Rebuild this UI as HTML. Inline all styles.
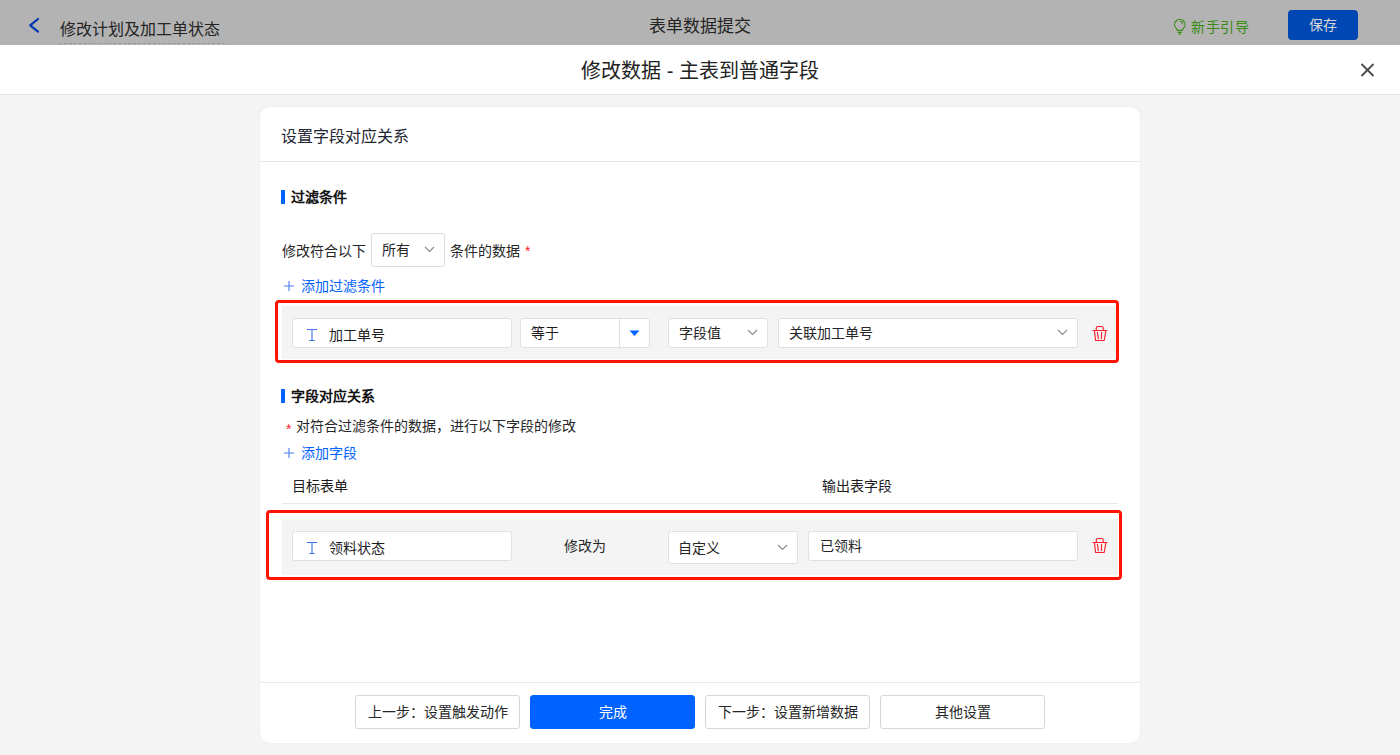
<!DOCTYPE html>
<html lang="zh-CN"><head><meta charset="utf-8">
<style>
*{box-sizing:border-box;margin:0;padding:0}
html,body{width:1400px;height:755px;overflow:hidden;background:#f4f4f4;font-family:"Liberation Sans",sans-serif;color:#333}
.abs{position:absolute}
.topbar{position:absolute;left:0;top:0;width:1400px;height:45px;background:#b3b3b3}
.mhead{position:absolute;left:0;top:45px;width:1400px;height:50px;background:#fff;border-bottom:1px solid #e2e2e2}
.card{position:absolute;left:260px;top:107px;width:880px;height:636px;background:#fff;border-radius:10px;box-shadow:0 0 3px rgba(0,0,0,0.04)}
.txt{position:absolute;white-space:nowrap;line-height:1}
.box{position:absolute;background:#fff;border:1px solid #e0e0e0;border-radius:3px}
.redbox{position:absolute;border:3px solid #ff1404;border-radius:4px}
.btn{position:absolute;top:695px;height:34px;border:1px solid #d6d6d6;border-radius:3px;background:#fff;font-size:14px;line-height:32px;text-align:center;color:#262626}
</style></head><body>
<div class="topbar">
  <svg class="abs" style="left:27px;top:17px" width="14" height="17" viewBox="0 0 14 17"><path d="M11 2 L3.2 8.3 L11 14.6" fill="none" stroke="#0039b3" stroke-width="2.2" stroke-linecap="round" stroke-linejoin="round"/></svg>
  <div class="txt" style="left:60px;top:21.5px;font-size:16px;color:#242424">修改计划及加工单状态</div>
  <div class="abs" style="left:59px;top:43px;width:166px;border-top:1px dashed #9a9a9a"></div>
  <div class="txt" style="left:649px;top:18px;font-size:17px;color:#242424">表单数据提交</div>
  <svg class="abs" style="left:1172px;top:17px" width="16" height="19" viewBox="0 0 16 19"><path d="M5.3 13.4Q5.3 12.2 3.82 10.84A5.2 5.2 0 1 1 11.78 10.84Q10.3 12.2 10.3 13.4Z" fill="none" stroke="#3c8d17" stroke-width="1.2" stroke-linejoin="round"/><path d="M5.6 15.4H9.9M6.6 17.2H8.9" stroke="#3c8d17" stroke-width="1.2"/><path d="M8.3 4.3A3.3 3.3 0 0 1 10.7 7" fill="none" stroke="#3c8d17" stroke-width="1.1" stroke-linecap="round"/></svg>
  <div class="txt" style="left:1191px;top:20px;font-size:14px;letter-spacing:0.5px;color:#3a8a14">新手引导</div>
  <div class="abs" style="left:1288px;top:10px;width:70px;height:30px;background:#0047b3;border-radius:4px;color:#d9d9d9;font-size:14px;line-height:30px;text-align:center">保存</div>
</div>
<div class="mhead">
  <div class="txt" style="left:0;width:1400px;text-align:center;top:16px;font-size:20px;color:#222">修改数据 - 主表到普通字段</div>
  <svg class="abs" style="left:1360px;top:18px" width="15" height="14" viewBox="0 0 15 14"><path d="M1.5 1 L13.5 13 M13.5 1 L1.5 13" stroke="#4a4a4a" stroke-width="1.8"/></svg>
</div>
<div class="card">
  <div class="txt" style="left:21px;top:21.5px;font-size:16px;color:#1e2733">设置字段对应关系</div>
  <div class="abs" style="left:0;top:54px;width:880px;border-top:1px solid #e6e6e6"></div>
</div>
<!-- section 1 -->
<div class="abs" style="left:281px;top:190px;width:4px;height:14px;background:#0062ff"></div>
<div class="txt" style="left:291px;top:190px;font-size:14px;font-weight:bold;color:#111">过滤条件</div>
<div class="txt" style="left:282px;top:244px;font-size:14px;color:#262626">修改符合以下</div>
<div class="box" style="left:371px;top:233px;width:74px;height:34px;border-color:#dcdcdc"></div>
<div class="txt" style="left:382px;top:243px;font-size:14px;color:#262626">所有</div>
<svg class="abs" style="left:424px;top:246px" width="11" height="7" viewBox="0 0 11 7"><path d="M1 1 L5.5 5.5 L10 1" fill="none" stroke="#8c8c8c" stroke-width="1.2"/></svg>
<div class="txt" style="left:450px;top:244px;font-size:14px;color:#262626">条件的数据</div>
<div class="txt" style="left:525px;top:244px;font-size:14px;color:#f5222d">*</div>
<svg class="abs" style="left:283px;top:280px" width="12" height="12" viewBox="0 0 12 12"><path d="M1 6H11M6 1V11" stroke="#4d7cf8" stroke-width="1.1"/></svg>
<div class="txt" style="left:301px;top:279px;font-size:14px;color:#0062ff">添加过滤条件</div>

<div class="abs" style="left:282px;top:306px;width:836px;height:53px;background:#f4f4f4"></div>
<div class="box" style="left:292px;top:318px;width:220px;height:30px"></div>
<svg class="abs" style="left:306px;top:328px" width="12" height="14" viewBox="0 0 12 14"><path d="M1 1.5H11M6 1.5V12.5M3.3 12.5H8.7" fill="none" stroke="#3a6df0" stroke-width="1.1"/></svg>
<div class="txt" style="left:329px;top:328px;font-size:14px;color:#1c1c1c">加工单号</div>
<div class="box" style="left:520px;top:318px;width:130px;height:30px"></div>
<div class="abs" style="left:619px;top:319px;width:1px;height:28px;background:#e0e0e0"></div>
<svg class="abs" style="left:629px;top:330px" width="11" height="7" viewBox="0 0 11 7"><path d="M0.5 0.5 L10.5 0.5 L5.5 6 Z" fill="#0062ff"/></svg>
<div class="txt" style="left:531px;top:326px;font-size:14px;color:#1c1c1c">等于</div>
<div class="box" style="left:668px;top:318px;width:100px;height:30px"></div>
<div class="txt" style="left:679px;top:326px;font-size:14px;color:#262626">字段值</div>
<svg class="abs" style="left:747px;top:329px" width="11" height="7" viewBox="0 0 11 7"><path d="M1 1 L5.5 5.5 L10 1" fill="none" stroke="#8c8c8c" stroke-width="1.2"/></svg>
<div class="box" style="left:778px;top:318px;width:300px;height:30px"></div>
<div class="txt" style="left:789px;top:326px;font-size:14px;color:#262626">关联加工单号</div>
<svg class="abs" style="left:1057px;top:329px" width="11" height="7" viewBox="0 0 11 7"><path d="M1 1 L5.5 5.5 L10 1" fill="none" stroke="#8c8c8c" stroke-width="1.2"/></svg>
<svg class="abs" style="left:1092px;top:325px" width="16" height="17" viewBox="0 0 16 17"><path d="M0.9 5.5H14.9M4.3 5.5V3Q4.3 1.5 5.8 1.5H9.7Q11.2 1.5 11.2 3V5.5M2.4 5.5L3.6 15.5H12.2L13.9 5.5M5.4 7.3L6.3 13.6M9.6 7.3L9.4 13.6" fill="none" stroke="#fb1e2c" stroke-width="1.15" stroke-linecap="round" stroke-linejoin="round"/></svg>
<div class="redbox" style="left:275px;top:300px;width:844px;height:63px"></div>

<!-- section 2 -->
<div class="abs" style="left:281px;top:389px;width:4px;height:14px;background:#0062ff"></div>
<div class="txt" style="left:291px;top:389px;font-size:14px;font-weight:bold;color:#111">字段对应关系</div>
<div class="txt" style="left:286px;top:422px;font-size:14px;color:#f5222d">*</div>
<div class="txt" style="left:296px;top:419px;font-size:14px;color:#262626">对符合过滤条件的数据，进行以下字段的修改</div>
<svg class="abs" style="left:283px;top:447px" width="12" height="12" viewBox="0 0 12 12"><path d="M1 6H11M6 1V11" stroke="#4d7cf8" stroke-width="1.1"/></svg>
<div class="txt" style="left:301px;top:446px;font-size:14px;color:#0062ff">添加字段</div>
<div class="txt" style="left:292px;top:479px;font-size:14px;color:#1c1c1c">目标表单</div>
<div class="txt" style="left:822px;top:479px;font-size:14px;color:#1c1c1c">输出表字段</div>
<div class="abs" style="left:282px;top:503px;width:836px;height:1px;background:#e8e8e8"></div>

<div class="abs" style="left:282px;top:519px;width:836px;height:56px;background:#f4f4f4"></div>
<div class="box" style="left:292px;top:531px;width:220px;height:30px"></div>
<svg class="abs" style="left:306px;top:541px" width="12" height="14" viewBox="0 0 12 14"><path d="M1 1.5H11M6 1.5V12.5M3.3 12.5H8.7" fill="none" stroke="#3a6df0" stroke-width="1.1"/></svg>
<div class="txt" style="left:329px;top:541px;font-size:14px;color:#1c1c1c">领料状态</div>
<div class="txt" style="left:564px;top:539px;font-size:14px;color:#262626">修改为</div>
<div class="box" style="left:668px;top:531px;width:130px;height:33px"></div>
<div class="txt" style="left:678px;top:541px;font-size:14px;color:#262626">自定义</div>
<svg class="abs" style="left:777px;top:544px" width="11" height="7" viewBox="0 0 11 7"><path d="M1 1 L5.5 5.5 L10 1" fill="none" stroke="#8c8c8c" stroke-width="1.2"/></svg>
<div class="box" style="left:808px;top:531px;width:270px;height:30px"></div>
<div class="txt" style="left:820px;top:539px;font-size:14px;color:#262626">已领料</div>
<svg class="abs" style="left:1092px;top:537px" width="16" height="17" viewBox="0 0 16 17"><path d="M0.9 5.5H14.9M4.3 5.5V3Q4.3 1.5 5.8 1.5H9.7Q11.2 1.5 11.2 3V5.5M2.4 5.5L3.6 15.5H12.2L13.9 5.5M5.4 7.3L6.3 13.6M9.6 7.3L9.4 13.6" fill="none" stroke="#fb1e2c" stroke-width="1.15" stroke-linecap="round" stroke-linejoin="round"/></svg>
<div class="redbox" style="left:266px;top:510px;width:856px;height:70px"></div>

<!-- footer -->
<div class="abs" style="left:260px;top:682px;width:880px;height:1px;background:#e8e8e8"></div>
<div class="btn" style="left:355px;width:165px">上一步：设置触发动作</div>
<div class="btn" style="left:530px;width:165px;background:#0062ff;border-color:#0062ff;color:#fff">完成</div>
<div class="btn" style="left:705px;width:165px">下一步：设置新增数据</div>
<div class="btn" style="left:880px;width:165px">其他设置</div>
</body></html>
